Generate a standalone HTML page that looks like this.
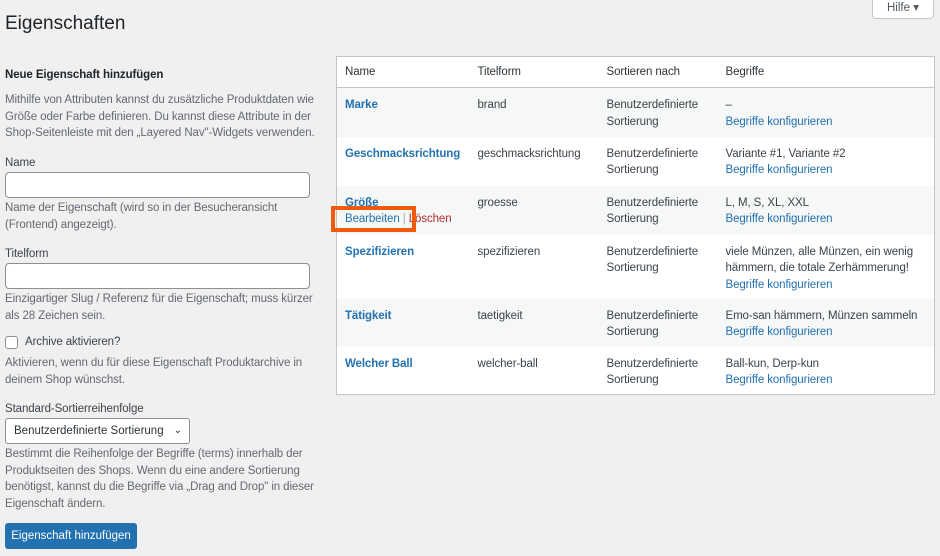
<!DOCTYPE html>
<html><head><meta charset="utf-8"><style>
*{box-sizing:border-box;margin:0;padding:0}
body{width:940px;height:556px;overflow:hidden;background:#f0f0f1;font-family:"Liberation Sans",sans-serif;font-size:11.5px;color:#3c434a;position:relative}
.a{position:absolute}
h1{position:absolute;left:5px;top:13px;font-size:19px;font-weight:400;color:#1d2327}
.help{left:872px;top:-6px;width:62px;height:25px;background:#fff;border:1px solid #c3c4c7;border-radius:0 0 4px 4px;font-size:11.5px;color:#50575e;text-align:center;line-height:22px;padding-top:2px}
.l{left:5px;width:320px;line-height:18px;letter-spacing:-0.1px}
.desc{color:#646970}
input.t{position:absolute;left:5px;width:305px;height:26px;border:1px solid #8c8f94;border-radius:4px;background:#fff}
table{position:absolute;left:336px;top:56px;width:599px;border:1px solid #c3c4c7;border-collapse:collapse;background:#fff;letter-spacing:-0.1px}
th{font-weight:400;text-align:left;height:31px;border-bottom:1px solid #c3c4c7;padding:0 0 0 8px;color:#2c3338;font-size:11.5px}
td{vertical-align:top;padding:9px 0 0 8px;line-height:16.5px;font-size:11.5px}
tr.s td{background:#f6f7f7}
.n{color:#2271b1;font-weight:700}
.lk{color:#2271b1}
</style></head><body>
<h1>Eigenschaften</h1>
<div class="a help">Hilfe ▾</div>
<div class="a l" style="top:66px;font-weight:700;color:#1d2327">Neue Eigenschaft hinzufügen</div>
<div class="a l desc" style="top:92px;line-height:16.5px">Mithilfe von Attributen kannst du zusätzliche Produktdaten wie Größe oder Farbe definieren. Du kannst diese Attribute in der Shop-Seitenleiste mit den „Layered Nav"-Widgets verwenden.</div>
<div class="a l" style="top:154px">Name</div>
<input class="t" style="top:172px">
<div class="a l desc" style="top:200px;line-height:16.5px">Name der Eigenschaft (wird so in der Besucheransicht<br>(Frontend) angezeigt).</div>
<div class="a l" style="top:245px">Titelform</div>
<input class="t" style="top:263px">
<div class="a l desc" style="top:291px;line-height:16.5px">Einzigartiger Slug / Referenz für die Eigenschaft; muss kürzer<br>als 28 Zeichen sein.</div>
<div class="a" style="left:5px;top:336px;width:13px;height:13px;border:1px solid #8c8f94;border-radius:3px;background:#fff"></div>
<div class="a l" style="left:25px;top:333px">Archive aktivieren?</div>
<div class="a l desc" style="top:355px;line-height:16.5px">Aktivieren, wenn du für diese Eigenschaft Produktarchive in<br>deinem Shop wünschst.</div>
<div class="a l" style="top:400px">Standard-Sortierreihenfolge</div>
<div class="a" style="left:5px;top:418px;width:185px;height:26px;border:1px solid #8c8f94;border-radius:3px;background:#fff;padding-left:8px;line-height:24px;color:#2c3338">Benutzerdefinierte Sortierung <span style="position:absolute;right:7px;top:0;font-size:10px">&#8964;</span></div>
<div class="a l desc" style="top:446px;line-height:16.5px">Bestimmt die Reihenfolge der Begriffe (terms) innerhalb der<br>Produktseiten des Shops. Wenn du eine andere Sortierung<br>benötigst, kannst du die Begriffe via „Drag and Drop" in dieser<br>Eigenschaft ändern.</div>
<div class="a" style="left:5px;top:523px;width:132px;height:26px;background:#2271b1;border-radius:3px;color:#fff;text-align:center;line-height:26px">Eigenschaft hinzufügen</div>
<table>
<tr><th style="width:133px">Name</th><th style="width:129px">Titelform</th><th style="width:119px">Sortieren nach</th><th>Begriffe</th></tr>
<tr class="s" style="height:49px"><td class="n">Marke</td><td>brand</td><td>Benutzerdefinierte<br>Sortierung</td><td>–<br><span class="lk">Begriffe konfigurieren</span></td></tr>
<tr style="height:49px"><td class="n">Geschmacksrichtung</td><td>geschmacksrichtung</td><td>Benutzerdefinierte<br>Sortierung</td><td>Variante #1, Variante #2<br><span class="lk">Begriffe konfigurieren</span></td></tr>
<tr class="s" style="height:49px"><td><span class="n">Größe</span><br><span class="lk">Bearbeiten</span> <span style="color:#a7aaad">|</span> <span style="color:#b32d2e">Löschen</span></td><td>groesse</td><td>Benutzerdefinierte<br>Sortierung</td><td>L, M, S, XL, XXL<br><span class="lk">Begriffe konfigurieren</span></td></tr>
<tr style="height:64px"><td class="n">Spezifizieren</td><td>spezifizieren</td><td>Benutzerdefinierte<br>Sortierung</td><td>viele Münzen, alle Münzen, ein wenig<br>hämmern, die totale Zerhämmerung!<br><span class="lk">Begriffe konfigurieren</span></td></tr>
<tr class="s" style="height:48px"><td class="n">Tätigkeit</td><td>taetigkeit</td><td>Benutzerdefinierte<br>Sortierung</td><td>Emo-san hämmern, Münzen sammeln<br><span class="lk">Begriffe konfigurieren</span></td></tr>
<tr style="height:48px"><td class="n">Welcher Ball</td><td>welcher-ball</td><td>Benutzerdefinierte<br>Sortierung</td><td>Ball-kun, Derp-kun<br><span class="lk">Begriffe konfigurieren</span></td></tr>
</table>
<div class="a" style="left:331px;top:206px;width:85px;height:26px;border:4px solid #f05a0a"></div>
</body></html>
